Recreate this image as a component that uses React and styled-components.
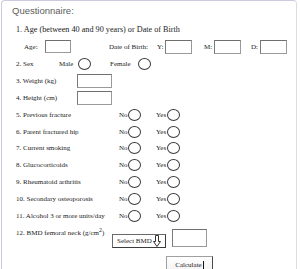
import React from "react";
import styled, { createGlobalStyle } from "styled-components";

const GlobalStyle = createGlobalStyle`
  html, body {
    margin: 0;
    padding: 0;
    background: #fff;
  }
`;

const Panel = styled.div`
  margin-left: 1px;
  width: 296px;
  min-height: 269px;
  box-sizing: border-box;
  border: 1px solid #cdc9df;
  border-right-color: #dcdcdc;
  border-bottom: none;
  border-radius: 4px 4px 0 0;
  padding-top: 4px;
  background: #fff;
`;

const Heading = styled.h2`
  margin: 0;
  padding-left: 10px;
  font-family: "Liberation Sans", Arial, sans-serif;
  font-weight: normal;
  font-size: 9.5px;
  line-height: 12px;
  color: #5c5c5c;
`;

const Form = styled.form`
  margin-top: 3.5px;
  padding-left: 14px;
  display: flex;
  flex-direction: column;
  font-family: "Liberation Serif", "Times New Roman", serif;
  font-size: 7px;
  color: #222;
`;

const Row = styled.div`
  display: flex;
  align-items: ${(p) => (p.$top ? "flex-start" : "center")};
  height: ${(p) => p.$h || 17}px;
  padding-left: ${(p) => p.$indent || 0}px;
  font-size: ${(p) => p.$fs || 7}px;
  white-space: nowrap;
`;

const Cell = styled.span`
  display: inline-block;
  width: ${(p) => p.$w}px;
  margin-left: ${(p) => p.$ml || 0}px;
  margin-top: ${(p) => p.$mt || 0}px;
  flex-shrink: 0;
`;

const Box = styled.input`
  box-sizing: border-box;
  width: ${(p) => p.$w || 27}px;
  height: ${(p) => p.$h || 14}px;
  margin: 0;
  margin-left: ${(p) => p.$ml || 0}px;
  margin-top: ${(p) => p.$mt || 0}px;
  padding: 0;
  border: 1px solid #9a9a9a;
  border-top-color: #6f6f6f;
  border-left-color: #7a7a7a;
  background: #fff;
  flex-shrink: 0;
`;

const Radio = styled.span`
  display: inline-block;
  box-sizing: border-box;
  width: 13px;
  height: 12px;
  border: 1px solid #3a3a3a;
  border-radius: 50%;
  background: #fff;
  margin-left: ${(p) => p.$ml || 0}px;
  flex-shrink: 0;
`;

const SelectButton = styled.button`
  box-sizing: border-box;
  display: flex;
  align-items: center;
  gap: 1px;
  width: 54px;
  height: 14px;
  margin-top: 10px;
  padding: 0 0 0 4px;
  border: 1px solid #6a6a6a;
  border-right-color: #3c3c3c;
  border-bottom-color: #3c3c3c;
  background: #fff;
  font-family: "Liberation Serif", "Times New Roman", serif;
  font-size: 7px;
  color: #222;
  flex-shrink: 0;
`;

const CalcButton = styled.button`
  box-sizing: border-box;
  width: 47px;
  height: 18px;
  margin: 8px 0 0 150px;
  padding: 0;
  border: 1px solid #a0a0a0;
  border-right-color: #4a4a4a;
  border-bottom-color: #4a4a4a;
  background: linear-gradient(#ffffff, #f1f1f1);
  font-family: "Liberation Serif", "Times New Roman", serif;
  font-size: 7px;
  color: #222;
  align-self: flex-start;
`;

const Caret = styled.span`
  display: inline-block;
  width: 1px;
  height: 9px;
  background: #111;
  vertical-align: middle;
  margin-left: 1px;
`;

function DownArrow() {
  return (
    <svg width="8" height="12" viewBox="0 0 8 12">
      <path
        d="M2.5 0.5 H5.5 V6.5 H7.5 L4 11.5 L0.5 6.5 H2.5 Z"
        fill="#fff"
        stroke="#333"
        strokeWidth="1"
      />
    </svg>
  );
}

const yesNo = [
  "5. Previous fracture",
  "6. Parent fractured hip",
  "7. Current smoking",
  "8. Glucocorticoids",
  "9. Rheumatoid arthritis",
  "10. Secondary osteoporosis",
  "11. Alcohol 3 or more units/day",
];

export default function App() {
  return (
    <>
      <GlobalStyle />
      <Panel>
        <Heading>Questionnaire:</Heading>
        <Form>
          <Row $fs={8.2}>1. Age (between 40 and 90 years) or Date of Birth</Row>
          <Row $h={18} $indent={8}>
            <Cell $w={21}>Age:</Cell>
            <Box $w={26} $h={13} />
            <Cell $w={48} $ml={38}>Date of Birth:</Cell>
            <Cell $w={8}>Y:</Cell>
            <Box />
            <Cell $w={10} $ml={12}>M:</Cell>
            <Box />
            <Cell $w={9} $ml={10}>D:</Cell>
            <Box />
          </Row>
          <Row>
            <Cell $w={43}>2. Sex</Cell>
            <Cell $w={19}>Male</Cell>
            <Radio />
            <Cell $w={28} $ml={19}>Female</Cell>
            <Radio />
          </Row>
          <Row>
            <Cell $w={61}>3. Weight (kg)</Cell>
            <Box $w={35} />
          </Row>
          <Row>
            <Cell $w={61}>4. Height (cm)</Cell>
            <Box $w={35} />
          </Row>
          {yesNo.map((q) => (
            <Row key={q} $h={16.8}>
              <Cell $w={103}>{q}</Cell>
              <Cell $w={9}>No</Cell>
              <Radio />
              <Cell $w={11} $ml={15}>Yes</Cell>
              <Radio />
            </Row>
          ))}
          <Row $top $h={24}>
            <Cell $w={96} $mt={3}>
              12. BMD femoral neck (g/cm<sup>2</sup>)
            </Cell>
            <SelectButton type="button">
              Select BMD
              <DownArrow />
            </SelectButton>
            <Box $w={35} $h={18} $ml={6} $mt={5} />
          </Row>
          <CalcButton type="button">
            Calculate
            <Caret />
          </CalcButton>
        </Form>
      </Panel>
    </>
  );
}
